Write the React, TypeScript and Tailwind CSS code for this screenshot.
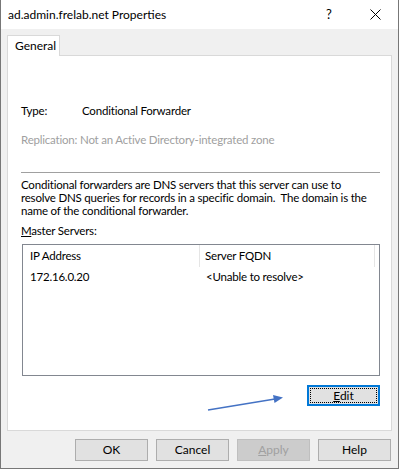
import React from "react";

const font = "font-['Lato','Segoe_UI',sans-serif]";

const DialogButton = ({ children, disabled }: { children: React.ReactNode; disabled?: boolean }) => (
  <button
    className={`w-[73px] h-[22px] border text-[12px] leading-none flex items-center justify-center ${
      disabled ? "bg-[#cccccc] border-[#bfbfbf] text-[#a0a0a0]" : "bg-[#e1e1e1] border-[#adadad] text-black"
    }`}
  >
    {children}
  </button>
);

export default function App() {
  return (
    <div className={`${font} w-[399px] h-[469px] bg-[#f0f0f0] border-x border-b border-[#777777] flex flex-col text-[12px] text-black`}>
      {/* title bar */}
      <div className="h-[29px] bg-white flex items-center shrink-0">
        <div className="pl-[7px] text-[12px] flex-1">ad.admin.frelab.net Properties</div>
        <div className="w-[46px] flex justify-center text-[13px]">?</div>
        <div className="w-[46px] h-[29px] flex items-center justify-center">
          <svg width="11" height="11" viewBox="0 0 11 11">
            <path d="M0.5 0.5 L10.5 10.5 M10.5 0.5 L0.5 10.5" stroke="#000" strokeWidth="1" fill="none" />
          </svg>
        </div>
      </div>

      <div className="px-[6px] pt-[6px] flex flex-col">
        {/* tab */}
        <div className="flex">
          <div className="relative z-10 -mb-px h-[21px] w-[53px] bg-white border border-b-0 border-[#d9d9d9] pl-[7px] flex items-center">
            General
          </div>
        </div>

        {/* tab panel */}
        <div className="h-[376px] bg-white border border-[#d9d9d9] px-[13px] pt-[47px] flex flex-col text-[11.5px] tracking-[-0.2px]">
          <div className="flex leading-[15px]">
            <span className="w-[61px]">Type:</span>
            <span>Conditional Forwarder</span>
          </div>
          <div className="mt-[14px] leading-[15px] text-[#a0a0a0]">
            Replication: Not an Active Directory-integrated zone
          </div>

          <div className="mt-[25px] h-px bg-[#a0a0a0] mr-[-2px]" />

          <div className="mt-[5px] leading-[13px] whitespace-nowrap">
            <div>Conditional forwarders are DNS servers that this server can use to</div>
            <div>resolve DNS queries for records in a specific domain.&nbsp; The domain is the</div>
            <div>name of the conditional forwarder.</div>
          </div>

          <div className="mt-[7px] leading-[13px]">
            <span className="underline">M</span>aster Servers:
          </div>

          {/* list */}
          <div className="mt-[7px] ml-px mr-[-2px] h-[132px] border border-[#828790] bg-white flex flex-col">
            <div className="h-[22px] flex">
              <div className="w-[177px] border-r border-[#e5e5e5] pl-[7px] flex items-center">IP Address</div>
              <div className="w-[175px] border-r border-[#e5e5e5] pl-[5px] flex items-center">Server FQDN</div>
            </div>
            <div className="h-[19px] flex items-center">
              <div className="w-[177px] pl-[7px]">172.16.0.20</div>
              <div className="pl-[6px]">&lt;Unable to resolve&gt;</div>
            </div>
          </div>

          {/* edit button + arrow */}
          <div className="relative mt-[9px] flex justify-end mr-[-2px]">
            <svg className="absolute left-[186px] top-[9px]" width="80" height="20" viewBox="0 0 80 20">
              <line x1="1" y1="16" x2="68" y2="5" stroke="#4472c4" strokeWidth="1.3" />
              <polygon points="76,3.5 66,1 67.5,9" fill="#4472c4" />
            </svg>
            <button className="w-[73px] h-[21px] border-2 border-[#0078d7] bg-[#e1e1e1] p-px text-[12px] tracking-normal">
              <div className="w-full h-full border border-dotted border-black flex items-center justify-center leading-none">
                <span><span className="underline">E</span>dit</span>
              </div>
            </button>
          </div>
        </div>

        {/* bottom buttons */}
        <div className="mt-[8px] flex justify-end gap-[8px] pr-[1px]">
          <DialogButton>OK</DialogButton>
          <DialogButton>Cancel</DialogButton>
          <DialogButton disabled>
            <span><span className="underline">A</span>pply</span>
          </DialogButton>
          <DialogButton>Help</DialogButton>
        </div>
      </div>
    </div>
  );
}
